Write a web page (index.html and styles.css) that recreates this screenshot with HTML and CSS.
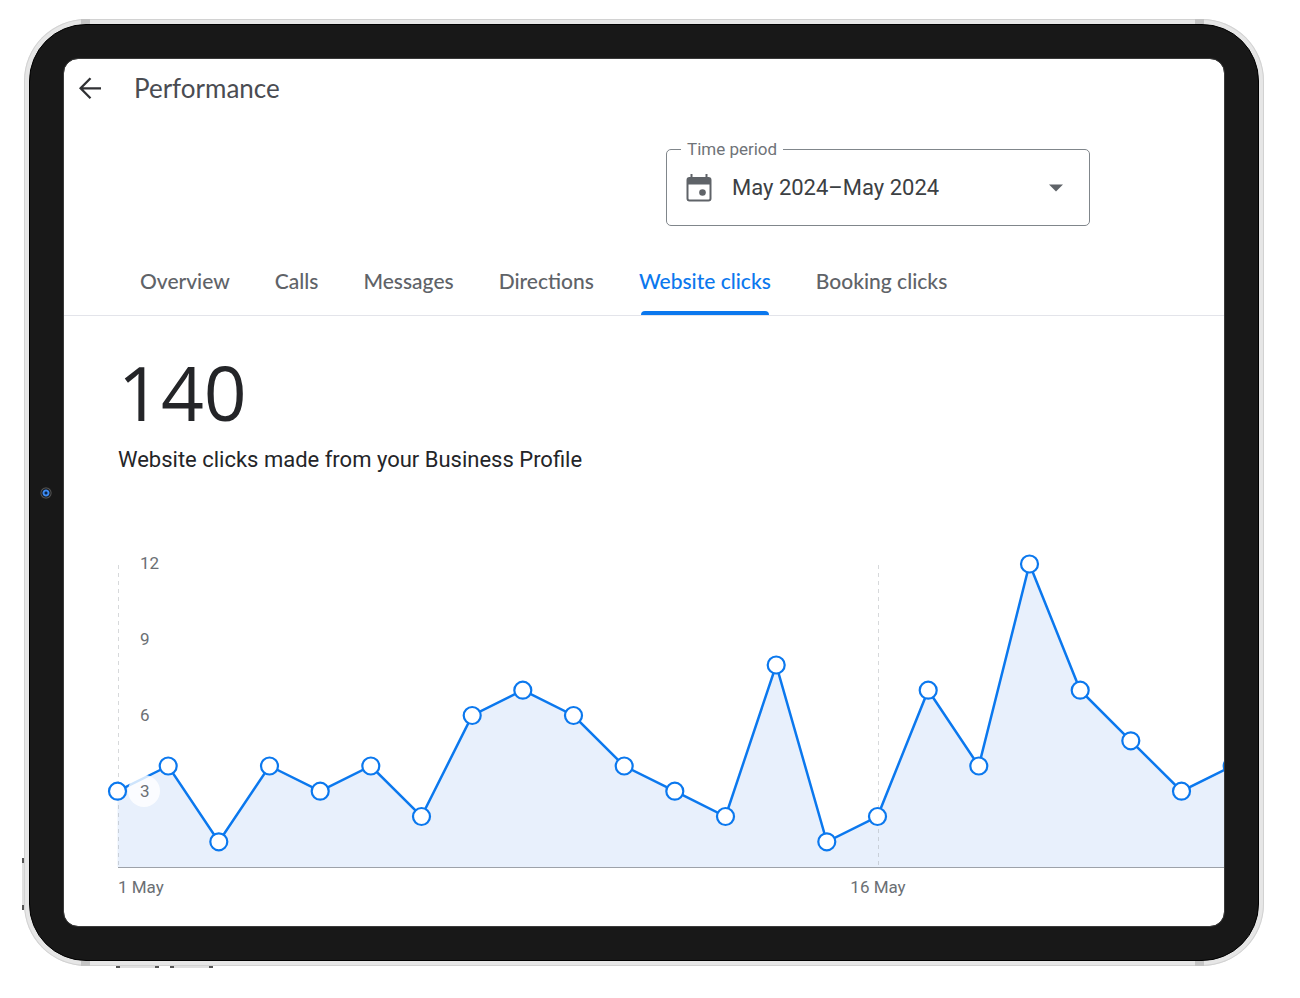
FILE: index.html
```html
<!DOCTYPE html>
<html lang="en">
<head>
<meta charset="utf-8">
<meta name="viewport" content="width=device-width, initial-scale=1">
<title>Performance</title>
<link rel="stylesheet" href="styles.css">
</head>
<body>
<div class="device">
  <span class="antenna antenna-tl"></span>
  <span class="antenna antenna-tr"></span>
  <span class="antenna antenna-bl"></span>
  <span class="antenna antenna-br"></span>
  <span class="key key-power"></span>
  <span class="key key-volume-up"></span>
  <span class="key key-volume-down"></span>
  <div class="bezel">
    <span class="camera"></span>
    <main class="screen">
      <header class="topbar">
        <button class="back" type="button" aria-label="Back">
          <svg width="24" height="24" viewBox="0 0 24 24" fill="none" stroke="#303134" stroke-width="2.3"><path d="M23 12.300H3M12.500 2.200 2.600 12.300l9.900 10"/></svg>
        </button>
        <h1 class="title">Performance</h1>
      </header>

      <div class="filters">
        <fieldset class="period">
          <legend class="period-legend"><label for="period">Time period</label></legend>
          <div class="period-row">
            <svg class="calendar" width="26" height="28" viewBox="0 0 26 28"><path d="M4.500 0h2v3h13V0h2v3h1A3 3 0 0 1 25.500 6v18.500a3 3 0 0 1-3 3h-19a3 3 0 0 1-3-3V6a3 3 0 0 1 3-3h1zM2.500 10.500v14a1 1 0 0 0 1 1h19a1 1 0 0 0 1-1v-14z" fill="#5f6368" fill-rule="evenodd"/><circle cx="16.500" cy="18.500" r="3.300" fill="#5f6368"/></svg>
            <select class="period-select" id="period"><option>May 2024–May 2024</option></select>
            <svg class="caret" width="14" height="8" viewBox="0 0 14 8"><path d="M0 .5h14L7 7.500z" fill="#5f6368"/></svg>
          </div>
        </fieldset>
      </div>

      <nav class="tabs">
        <a class="tab" href="#overview">Overview</a>
        <a class="tab" href="#calls">Calls</a>
        <a class="tab" href="#messages">Messages</a>
        <a class="tab" href="#directions">Directions</a>
        <a class="tab tab-active" href="#website" aria-current="page">Website clicks</a>
        <a class="tab" href="#booking">Booking clicks</a>
      </nav>

      <section class="summary">
        <p class="total">140</p>
        <p class="caption">Website clicks made from your Business Profile</p>
      </section>

      <svg class="chart" viewBox="0 0 1160 386" role="img" aria-label="Website clicks per day">
        <path class="area" d="M53.500 327V251.200L104.200 226 154.800 301.800 205.500 226 256.200 251.200 306.800 226 357.500 276.500 408.200 175.500 458.800 150.200 509.500 175.500 560.200 226 610.800 251.200 661.500 276.500 712.200 125 762.800 301.800 813.500 276.500 864.200 150.200 914.800 226 965.500 24 1016.200 150.200 1066.800 200.800 1117.500 251.200 1168.200 226V327z"/>
        <path class="grid" d="M54.500 25V327M814.500 25V327"/>
        <path class="axis" d="M54 327.500H1160"/>
        <path class="line" d="M53.500 251.200L104.200 226 154.800 301.800 205.500 226 256.200 251.200 306.800 226 357.500 276.500 408.200 175.500 458.800 150.200 509.500 175.500 560.200 226 610.800 251.200 661.500 276.500 712.200 125 762.800 301.800 813.500 276.500 864.200 150.200 914.800 226 965.500 24 1016.200 150.200 1066.800 200.800 1117.500 251.200 1168.200 226"/>
        <circle class="halo" cx="80" cy="251" r="16"/>
        <g class="dots">
          <circle cx="53.500" cy="251.200" r="8.500"/><circle cx="104.200" cy="226" r="8.500"/><circle cx="154.800" cy="301.800" r="8.500"/><circle cx="205.500" cy="226" r="8.500"/><circle cx="256.200" cy="251.200" r="8.500"/><circle cx="306.800" cy="226" r="8.500"/><circle cx="357.500" cy="276.500" r="8.500"/><circle cx="408.200" cy="175.500" r="8.500"/><circle cx="458.800" cy="150.200" r="8.500"/><circle cx="509.500" cy="175.500" r="8.500"/><circle cx="560.200" cy="226" r="8.500"/><circle cx="610.800" cy="251.200" r="8.500"/><circle cx="661.500" cy="276.500" r="8.500"/><circle cx="712.200" cy="125" r="8.500"/><circle cx="762.800" cy="301.800" r="8.500"/><circle cx="813.500" cy="276.500" r="8.500"/><circle cx="864.200" cy="150.200" r="8.500"/><circle cx="914.800" cy="226" r="8.500"/><circle cx="965.500" cy="24" r="8.500"/><circle cx="1016.200" cy="150.200" r="8.500"/><circle cx="1066.800" cy="200.800" r="8.500"/><circle cx="1117.500" cy="251.200" r="8.500"/><circle cx="1168.200" cy="226" r="8.500"/>
        </g>
        <g class="labels">
          <text x="76" y="29">12</text>
          <text x="76" y="105">9</text>
          <text x="76" y="181">6</text>
          <text x="76" y="257">3</text>
          <text x="54" y="353">1 May</text>
          <text x="814" y="353" text-anchor="middle">16 May</text>
        </g>
      </svg>
    </main>
  </div>
</div>
</body>
</html>
```
FILE: styles.css
```css
* {
  box-sizing: border-box;
}

body {
  margin: 0;
  padding: 19px 36px 32px 24px;
  background: #fff;
  font-family: Roboto, "Liberation Sans", sans-serif;
}

.device {
  position: relative;
  padding: 5px;
  border-radius: 62px;
  background: #e6e6e6;
  box-shadow: inset 0 0 0 1px #d2d2d2;
}

.antenna {
  position: absolute;
  width: 9px;
  height: 5px;
  background: #c4c4c4;
}

.antenna-tl { top: 0; left: 57px; }
.antenna-tr { top: 0; right: 60px; }
.antenna-bl { bottom: 0; left: 57px; }
.antenna-br { bottom: 0; right: 60px; }

.key {
  position: absolute;
  background: #e0e0e0;
  border: 0 solid #555;
}

.key-power {
  bottom: 56px;
  left: -2px;
  width: 2px;
  height: 52px;
  border-width: 5px 0;
}

.key-volume-up,
.key-volume-down {
  bottom: -2px;
  width: 43px;
  height: 2px;
  border-width: 0 4px;
}

.key-volume-up { left: 92px; }
.key-volume-down { left: 146px; }

.bezel {
  position: relative;
  padding: 33px;
  border: 1px solid #000;
  border-radius: 57px;
  background: #181818;
}

.camera {
  position: absolute;
  top: 50%;
  left: 10px;
  width: 12px;
  height: 12px;
  margin-top: -6px;
  border-radius: 50%;
  background: radial-gradient(circle, #0b2445 0 1px, #3d8af0 2px 3px, #111 4px, #555 5px, #222 6px);
}

.screen {
  overflow: hidden;
  border: 1px solid #3a3a3a;
  border-radius: 15px;
  background: #fff;
  background-clip: padding-box;
}

.topbar {
  display: flex;
  align-items: center;
  gap: 32px;
  height: 58px;
  padding: 0 14px;
}

.back {
  display: flex;
  padding: 0;
  border: 0;
  background: none;
}

.title {
  margin: 0;
  color: #4a4c52;
  font: 400 26px/32px Lato, sans-serif;
}

.filters {
  display: flex;
  justify-content: flex-end;
  padding: 22px 134px 0 0;
}

.period {
  width: 424px;
  margin: 0;
  padding: 0 14px;
  border: 1px solid #80868b;
  border-radius: 5px;
}

.period-legend {
  padding: 0 6px;
  color: #6f7378;
  font-size: 17px;
  line-height: 20px;
}

.period-row {
  display: flex;
  align-items: center;
  height: 66px;
  padding: 0 12px 8px 5px;
}

.calendar,
.caret {
  flex: none;
}

.period-select {
  flex: 1;
  margin-left: 20px;
  padding: 0;
  border: 0;
  appearance: none;
  background: none;
  color: #3c4043;
  font: 22px/28px Roboto, sans-serif;
}

.tabs {
  display: flex;
  gap: 45px;
  height: 90px;
  padding: 0 76px;
  border-bottom: 1px solid #e3e4ea;
}

.tab {
  position: relative;
  display: flex;
  align-items: center;
  padding-top: 20px;
  color: #5f6368;
  font: 500 21px/24px Lato, sans-serif;
  text-decoration: none;
  white-space: nowrap;
}

.tab-active {
  color: #0b78ee;
}

.tab-active::after {
  content: "";
  position: absolute;
  right: 2px;
  bottom: 0;
  left: 2px;
  height: 4px;
  border-radius: 4px 4px 0 0;
  background: #0b78ee;
}

.summary {
  padding: 36px 54px 66px;
}

.total {
  margin: 0;
  color: #242528;
  font: 400 75px/80px "Open Sans", sans-serif;
}

.caption {
  margin: 14px 0 0;
  color: #242528;
  font-size: 22px;
  line-height: 28px;
}

.chart {
  display: block;
  width: 100%;
}

.area { fill: #e8f0fc; }
.grid { fill: none; stroke: #9aa0a6; stroke-opacity: 0.400; stroke-dasharray: 4 4; }
.axis { fill: none; stroke: #9da2a9; }
.line { fill: none; stroke: #0b78ee; stroke-width: 2.500; }
.halo { fill: #fff; fill-opacity: 0.800; }
.dots { fill: #fff; stroke: #0b78ee; stroke-width: 2.200; }
.labels { fill: #6b6f74; font-size: 17px; }
```
